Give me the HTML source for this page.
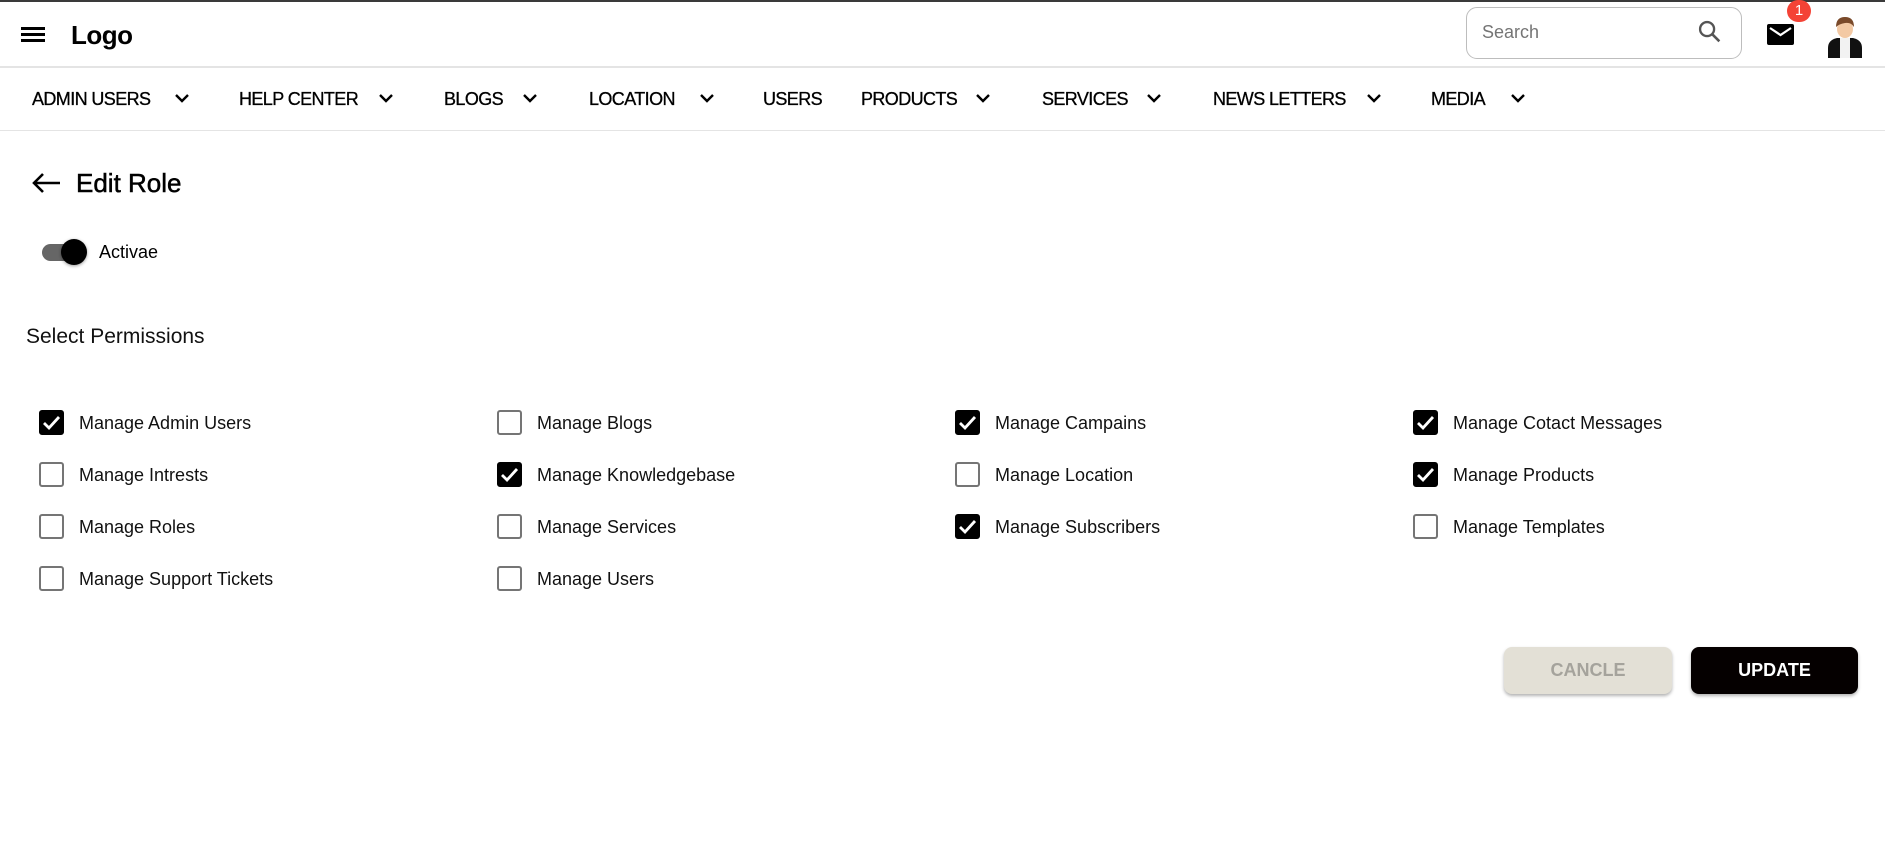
<!DOCTYPE html>
<html><head><meta charset="utf-8"><style>
*{box-sizing:border-box;margin:0;padding:0}
body{width:1885px;height:857px;background:#fff;font-family:"Liberation Sans",Arial,sans-serif;color:#000;position:relative;overflow:hidden}
.a{position:absolute}
.top{left:0;top:0;width:1885px;height:2px;background:#3a3a3a}
.hl{left:0;width:1885px;height:2px;background:#e4e4e4}
.nav{top:88px;font-size:18px;letter-spacing:-0.6px;line-height:22px;-webkit-text-stroke:0.3px #000}
.chev{top:92px}
.cb{width:25px;height:25px;border:2px solid #757575;border-radius:3px;background:#fff}
.cb.on{background:#000;border-color:#000}
.lb{font-size:18px;line-height:22px;color:#111}
</style></head><body>
<div class="a top"></div>
<div class="a hl" style="top:66px"></div>
<div class="a hl" style="top:130px;height:1px"></div>
<div class="a" style="left:21px;top:27px;width:24px;height:3px;background:#000"></div>
<div class="a" style="left:21px;top:33px;width:24px;height:3px;background:#000"></div>
<div class="a" style="left:21px;top:39px;width:24px;height:3px;background:#000"></div>
<div class="a" style="left:71px;top:19px;font-size:26px;font-weight:bold;letter-spacing:-0.5px;line-height:32px">Logo</div>
<div class="a" style="left:1466px;top:7px;width:276px;height:52px;border:1px solid #bdbdbd;border-radius:11px"></div>
<div class="a" style="left:1482px;top:21px;font-size:18px;color:#757575;line-height:22px">Search</div>
<svg class="a" style="left:1696px;top:18px" width="28" height="28" viewBox="0 0 24 24"><circle cx="9.5" cy="9.5" r="6" fill="none" stroke="#555" stroke-width="2"/><path d="M14 14l6 6" stroke="#555" stroke-width="2.2"/></svg>
<svg class="a" style="left:1767px;top:24px" width="27" height="21" viewBox="0 0 27 21"><rect width="27" height="21" rx="2" fill="#000"/><path d="M3 4l10.5 7L24 4" fill="none" stroke="#fff" stroke-width="2.2"/></svg>
<div class="a" style="left:1787px;top:0px;width:24px;height:22px;border-radius:11px;background:#f44336;color:#fff;font-size:15px;text-align:center;line-height:22px">1</div>
<svg class="a" style="left:1826px;top:14px" width="38" height="44" viewBox="0 0 38 44"><path d="M2 44V34q0-8 9-10h16q9 2 9 10v10z" fill="#111"/><path d="M14 24h10v20h-10z" fill="#f2f2f2"/><ellipse cx="19" cy="15" rx="8" ry="9" fill="#f3c9a4"/><path d="M10 13q0-10 9-10t9 10q-3-5-9-4t-9 4z" fill="#7a4a2a"/></svg>
<div class="a nav" style="left:32px">ADMIN USERS</div>
<div class="a nav" style="left:239px">HELP CENTER</div>
<div class="a nav" style="left:444px">BLOGS</div>
<div class="a nav" style="left:589px">LOCATION</div>
<div class="a nav" style="left:763px">USERS</div>
<div class="a nav" style="left:861px">PRODUCTS</div>
<div class="a nav" style="left:1042px">SERVICES</div>
<div class="a nav" style="left:1213px">NEWS LETTERS</div>
<div class="a nav" style="left:1431px">MEDIA</div>
<svg width="0" height="0" style="position:absolute"><defs><symbol id="c" viewBox="0 0 16 12"><path d="M2 3l6 6 6-6" fill="none" stroke="#000" stroke-width="2.4"/></symbol></defs></svg>
<svg class="a chev" style="left:174px" width="16" height="12"><use href="#c"/></svg>
<svg class="a chev" style="left:378px" width="16" height="12"><use href="#c"/></svg>
<svg class="a chev" style="left:522px" width="16" height="12"><use href="#c"/></svg>
<svg class="a chev" style="left:699px" width="16" height="12"><use href="#c"/></svg>
<svg class="a chev" style="left:975px" width="16" height="12"><use href="#c"/></svg>
<svg class="a chev" style="left:1146px" width="16" height="12"><use href="#c"/></svg>
<svg class="a chev" style="left:1366px" width="16" height="12"><use href="#c"/></svg>
<svg class="a chev" style="left:1510px" width="16" height="12"><use href="#c"/></svg>
<svg class="a" style="left:30px;top:171px" width="32" height="24" viewBox="0 0 32 24"><path d="M30 12H5M13 3l-9 9 9 9" fill="none" stroke="#000" stroke-width="2.6"/></svg>
<div class="a" style="left:76px;top:167px;font-size:26px;line-height:32px;-webkit-text-stroke:0.5px #000">Edit Role</div>
<div class="a" style="left:42px;top:244px;width:40px;height:17px;border-radius:9px;background:#666"></div>
<div class="a" style="left:61px;top:239px;width:26px;height:26px;border-radius:13px;background:#000;box-shadow:0 1px 3px rgba(0,0,0,.4)"></div>
<div class="a" style="left:99px;top:241px;font-size:18px;line-height:22px">Activae</div>
<div class="a" style="left:26px;top:325px;font-size:21px;line-height:24px;color:#111">Select Permissions</div>

<div class="a cb on" style="left:39px;top:410px"></div><svg class="a" style="left:39px;top:410px" width="25" height="25" viewBox="0 0 25 25"><path d="M5 13l5 5 10-11" fill="none" stroke="#fff" stroke-width="2.8"/></svg><div class="a lb" style="left:79px;top:412px">Manage Admin Users</div>
<div class="a cb" style="left:497px;top:410px"></div><div class="a lb" style="left:537px;top:412px">Manage Blogs</div>
<div class="a cb on" style="left:955px;top:410px"></div><svg class="a" style="left:955px;top:410px" width="25" height="25" viewBox="0 0 25 25"><path d="M5 13l5 5 10-11" fill="none" stroke="#fff" stroke-width="2.8"/></svg><div class="a lb" style="left:995px;top:412px">Manage Campains</div>
<div class="a cb on" style="left:1413px;top:410px"></div><svg class="a" style="left:1413px;top:410px" width="25" height="25" viewBox="0 0 25 25"><path d="M5 13l5 5 10-11" fill="none" stroke="#fff" stroke-width="2.8"/></svg><div class="a lb" style="left:1453px;top:412px">Manage Cotact Messages</div>

<div class="a cb" style="left:39px;top:462px"></div><div class="a lb" style="left:79px;top:464px">Manage Intrests</div>
<div class="a cb on" style="left:497px;top:462px"></div><svg class="a" style="left:497px;top:462px" width="25" height="25" viewBox="0 0 25 25"><path d="M5 13l5 5 10-11" fill="none" stroke="#fff" stroke-width="2.8"/></svg><div class="a lb" style="left:537px;top:464px">Manage Knowledgebase</div>
<div class="a cb" style="left:955px;top:462px"></div><div class="a lb" style="left:995px;top:464px">Manage Location</div>
<div class="a cb on" style="left:1413px;top:462px"></div><svg class="a" style="left:1413px;top:462px" width="25" height="25" viewBox="0 0 25 25"><path d="M5 13l5 5 10-11" fill="none" stroke="#fff" stroke-width="2.8"/></svg><div class="a lb" style="left:1453px;top:464px">Manage Products</div>

<div class="a cb" style="left:39px;top:514px"></div><div class="a lb" style="left:79px;top:516px">Manage Roles</div>
<div class="a cb" style="left:497px;top:514px"></div><div class="a lb" style="left:537px;top:516px">Manage Services</div>
<div class="a cb on" style="left:955px;top:514px"></div><svg class="a" style="left:955px;top:514px" width="25" height="25" viewBox="0 0 25 25"><path d="M5 13l5 5 10-11" fill="none" stroke="#fff" stroke-width="2.8"/></svg><div class="a lb" style="left:995px;top:516px">Manage Subscribers</div>
<div class="a cb" style="left:1413px;top:514px"></div><div class="a lb" style="left:1453px;top:516px">Manage Templates</div>

<div class="a cb" style="left:39px;top:566px"></div><div class="a lb" style="left:79px;top:568px">Manage Support Tickets</div>
<div class="a cb" style="left:497px;top:566px"></div><div class="a lb" style="left:537px;top:568px">Manage Users</div>
<div class="a" style="left:1504px;top:647px;width:168px;height:47px;border-radius:8px;background:#e3e0d6;box-shadow:0 2px 3px rgba(0,0,0,.3);color:#a5a39c;font-size:18px;font-weight:bold;text-align:center;line-height:47px">CANCLE</div>
<div class="a" style="left:1691px;top:647px;width:167px;height:47px;border-radius:8px;background:#050000;box-shadow:0 2px 3px rgba(0,0,0,.3);color:#fff;font-size:18px;font-weight:bold;text-align:center;line-height:47px">UPDATE</div>
</body></html>
